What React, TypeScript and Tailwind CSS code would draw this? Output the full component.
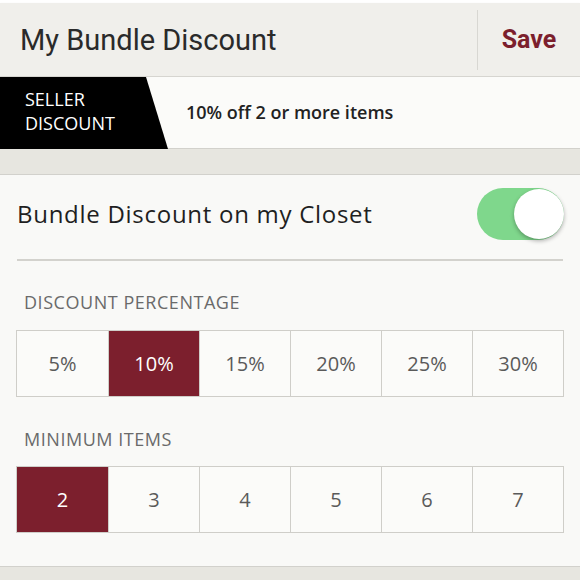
const percents = ["5%", "10%", "15%", "20%", "25%", "30%"];
const minItems = ["2", "3", "4", "5", "6", "7"];

function OptionRow({ options, selected }: { options: string[]; selected: string }) {
  return (
    <div className="grid grid-cols-6 border border-[#cfcec9] mx-[16px]">
      {options.map((opt, i) => (
        <div
          key={opt}
          className={`h-[65px] flex items-center justify-center text-[20px] ${
            i > 0 ? "border-l border-[#cfcec9]" : ""
          } ${opt === selected ? "bg-[#7c1f2d] text-white" : "bg-[#fbfbf9] text-[#5a5a5a]"}`}
        >
          {opt}
        </div>
      ))}
    </div>
  );
}

export default function App() {
  return (
    <div className="w-[580px] h-[580px] overflow-hidden bg-[#e7e6e0] font-['Open_Sans',sans-serif]">
      <div className="h-[3px] bg-white" />
      <div className="h-[74px] bg-[#f0efeb] flex items-center border-b border-[#d6d5d0] shadow-[0_1px_2px_rgba(0,0,0,0.12)]">
        <h1 className="flex-1 pl-[20px] pt-[2px] text-[29px] text-[#2a2a2a] font-['Roboto',sans-serif]">
          My Bundle Discount
        </h1>
        <div className="w-px h-[60px] bg-[#d8d7d2]" />
        <button className="w-[102px] text-[25px] font-bold text-[#7c1f2d] font-['Roboto',sans-serif] text-center">
          Save
        </button>
      </div>

      <div className="h-[72px] bg-[#fbfbf9] flex items-center border-b border-[#d2d1cc]">
        <div className="relative h-full w-[170px]">
          <svg className="absolute inset-0" width="170" height="72" viewBox="0 0 170 72">
            <polygon points="0,0 146,0 168,72 0,72" fill="#000" />
          </svg>
          <div className="relative pl-[25px] pt-[10px] text-white text-[18px] leading-[24px]">
            SELLER
            <br />
            DISCOUNT
          </div>
        </div>
        <p className="pl-[16px] text-[18px] font-semibold text-[#222]">10% off 2 or more items</p>
      </div>

      <div className="h-[26px] bg-[#e7e6e0] border-b border-[#d2d1cc]" />

      <div className="h-[392px] bg-[#f9f9f7] border-b border-[#d2d1cc]">
        <div className="flex items-center justify-between pl-[17px] pr-[16px] pt-[13px] pb-[19px]">
          <span className="text-[24px] tracking-[0.03em] text-[#1f1f1f]">Bundle Discount on my Closet</span>
          <div className="relative w-[87px] h-[52px] rounded-full bg-[#7fd78c]">
            <div className="absolute right-0 top-[1px] w-[50px] h-[50px] rounded-full bg-white shadow-[0_2px_4px_rgba(0,0,0,0.3)]" />
          </div>
        </div>
        <div className="mx-[17px] h-[2px] bg-[#d3d2cd]" />
        <div className="pl-[24px] pt-[30px] pb-[17px] text-[18px] tracking-[0.03em] text-[#6a6a6a] leading-[22px]">
          DISCOUNT PERCENTAGE
        </div>
        <OptionRow options={percents} selected="10%" />
        <div className="pl-[24px] pt-[31px] pb-[16px] text-[18px] tracking-[0.03em] text-[#6a6a6a] leading-[22px]">
          MINIMUM ITEMS
        </div>
        <OptionRow options={minItems} selected="2" />
      </div>
    </div>
  );
}
